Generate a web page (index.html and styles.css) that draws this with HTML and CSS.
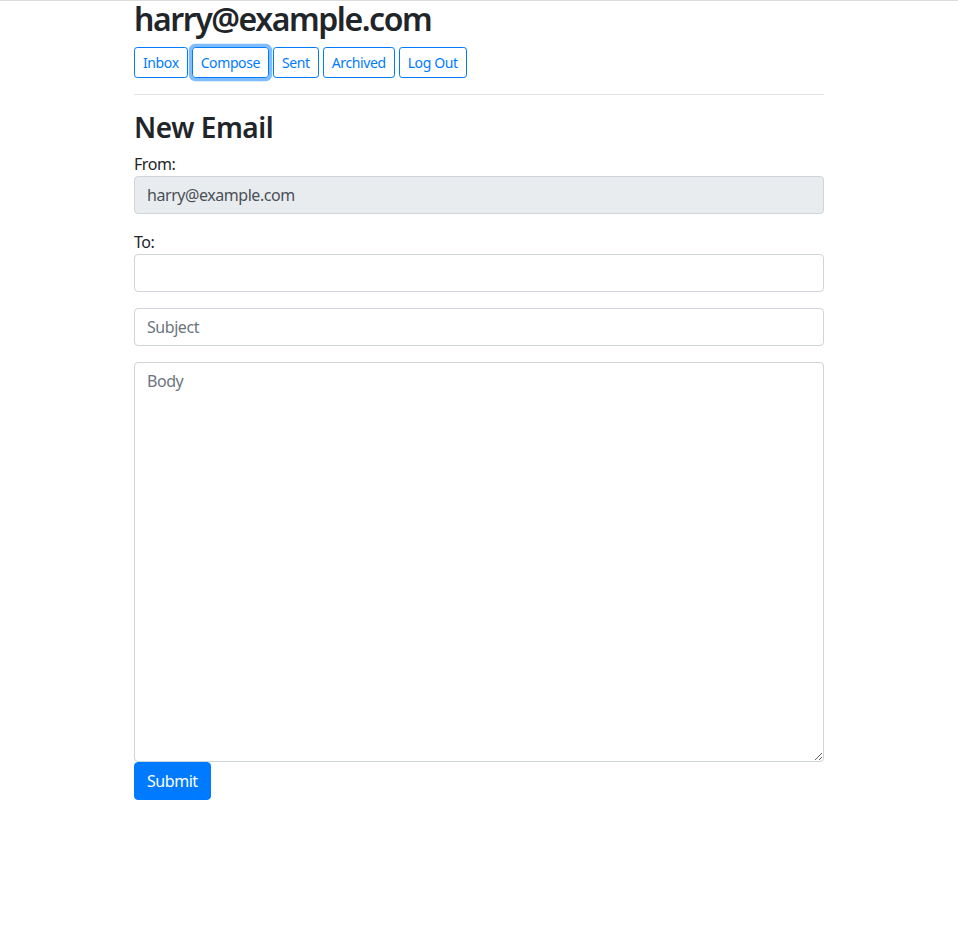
FILE: index.html
```html
<!DOCTYPE html>
<html lang="en">
<head>
<meta charset="utf-8">
<title>Mail</title>
<link rel="stylesheet" href="styles.css">
</head>
<body>
<div class="container">
  <h2 class="user">harry@example.com</h2>
  <div class="nav">
    <button class="btn btn-sm btn-outline">Inbox</button>
    <button class="btn btn-sm btn-outline focused">Compose</button>
    <button class="btn btn-sm btn-outline">Sent</button>
    <button class="btn btn-sm btn-outline">Archived</button>
    <a class="btn btn-sm btn-outline" href="#">Log Out</a>
  </div>
  <hr class="rule">
  <div class="compose">
    <h3 class="title">New Email</h3>
    <form class="compose-form">
      <div class="form-group">
        From: <input disabled class="form-control" value="harry@example.com">
      </div>
      <div class="form-group">
        To: <input class="form-control">
      </div>
      <div class="form-group">
        <input class="form-control" placeholder="Subject">
      </div>
      <textarea class="form-control body-field" placeholder="Body"></textarea>
      <input type="submit" class="btn btn-primary" value="Submit">
    </form>
  </div>
</div>
</body>
</html>
```
FILE: styles.css
```css
* { box-sizing: border-box; }
html { font-size: 16px; }
body {
  margin: 0;
  padding-top: 0.45px;
  box-shadow: inset 0 1px 0 #dcdcdc;
  font-family: "Noto Sans", "Open Sans", sans-serif;
  font-size: 1rem;
  line-height: 1.5;
  letter-spacing: -0.028em;
  color: #212529;
  background: #fff;
}
.container {
  max-width: 720px;
  margin: 0 auto;
  padding: 0 15px;
}
.user {
  margin: 0 0 8px;
  font-size: 2rem;
  font-weight: 600;
  letter-spacing: -0.045em;
  line-height: 1.2;
}
.nav { display: flex; gap: 4px; }
.btn {
  display: inline-block;
  font-family: inherit;
  font-weight: 400;
  letter-spacing: -0.028em;
  text-align: center;
  text-decoration: none;
  border: 1px solid transparent;
  background: transparent;
  cursor: pointer;
  padding: 6px 12px;
  font-size: 1rem;
  line-height: 1.5;
  border-radius: 4px;
}
.btn-sm {
  padding: 4px 8px;
  font-size: 0.875rem;
  line-height: 1.5;
  border-radius: 3.2px;
}
.btn-outline {
  color: #007bff;
  border-color: #007bff;
}
.btn-outline.focused {
  box-shadow: 0 0 0 3.2px rgba(0, 123, 255, 0.5);
}
.rule {
  margin: 16px 0;
  border: 0;
  border-top: 1px solid rgba(0, 0, 0, 0.1);
}
.title {
  margin: 0 0 8px;
  font-size: 1.75rem;
  font-weight: 600;
  line-height: 1.2;
}
.form-group { margin-bottom: 16px; }
.form-control {
  display: block;
  width: 100%;
  height: 38px;
  padding: 6px 12px;
  font-family: inherit;
  font-size: 1rem;
  font-weight: 400;
  letter-spacing: -0.028em;
  line-height: 1.5;
  color: #495057;
  background: #fff;
  border: 1px solid #ced4da;
  border-radius: 4px;
  margin: 0;
}
.form-control::placeholder { color: #6c757d; opacity: 1; }
.form-control:disabled { background: #e9ecef; opacity: 1; }
.body-field {
  height: auto;
  min-height: 400px;
  resize: vertical;
  overflow: auto;
}
.btn-primary {
  color: #fff;
  background: #007bff;
  border-color: #007bff;
}
```
